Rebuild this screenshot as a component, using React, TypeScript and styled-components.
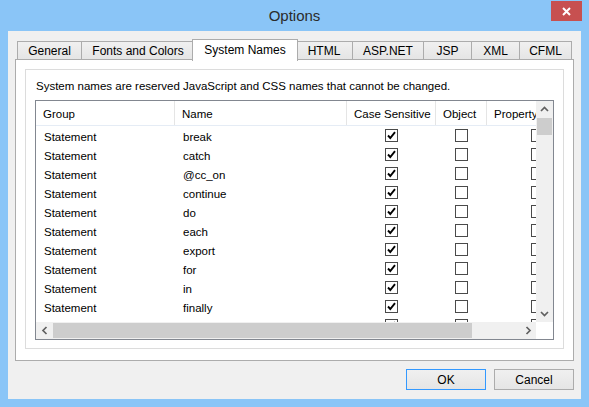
import React from "react";
import styled, { createGlobalStyle } from "styled-components";

const Global = createGlobalStyle`
  html, body { margin: 0; padding: 0; background: #8ac5f7; }
  * { box-sizing: border-box; }
  body { font-family: "Liberation Sans", Arial, sans-serif; font-size: 11.5px; color: #000; }
`;

const Window = styled.div`
  width: 589px;
  height: 407px;
  background: #8ac5f7;
  padding: 0 8px 8px 8px;
  display: flex;
  flex-direction: column;
  overflow: hidden;
`;

const TitleBar = styled.div`
  height: 31px;
  display: grid;
  grid-template-columns: 1fr auto 1fr;
  align-items: start;
`;

const Title = styled.div`
  grid-column: 2;
  font-size: 15px;
  color: #2b2b2b;
  line-height: 18px;
  margin-top: 7px;
`;

const CloseButton = styled.div`
  grid-column: 3;
  justify-self: end;
  margin-top: 1px;
  margin-right: -1px;
  width: 31px;
  height: 20px;
  background: #c75050;
  display: flex;
  align-items: center;
  justify-content: center;
`;

const Client = styled.div`
  flex: 1;
  background: #f0f0f0;
  padding: 8px 7px 8px 7px;
  display: flex;
  flex-direction: column;
`;

const TabStrip = styled.div`
  display: flex;
  align-items: flex-end;
  height: 21px;
  padding-left: 2px;
  position: relative;
  z-index: 1;
  font-size: 12px;
`;

const Tab = styled.div<{ $w: number; $active?: boolean }>`
  width: ${(p) => p.$w + (p.$active ? 4 : 0)}px;
  height: ${(p) => (p.$active ? 22 : 19)}px;
  margin-left: ${(p) => (p.$active ? -3 : -1)}px;
  margin-right: ${(p) => (p.$active ? -2 : 0)}px;
  margin-bottom: ${(p) => (p.$active ? -1 : 0)}px;
  border: 1px solid #acacac;
  border-bottom: ${(p) => (p.$active ? "none" : "1px solid #acacac")};
  background: ${(p) => (p.$active ? "#ffffff" : "linear-gradient(#f0f0f0, #e5e5e5)")};
  display: flex;
  justify-content: center;
  align-items: ${(p) => (p.$active ? "flex-start" : "center")};
  padding-top: ${(p) => (p.$active ? 3 : 1)}px;
  position: relative;
  z-index: ${(p) => (p.$active ? 2 : 0)};
  white-space: nowrap;
  &:first-child { margin-left: 0; }
`;

const Panel = styled.div`
  height: 302px;
  background: #fff;
  border: 1px solid #acacac;
  padding: 9px 9px 11px 9px;
  margin-top: -1px;
  display: flex;
  flex-direction: column;
`;

const GroupBox = styled.div`
  flex: 1;
  border: 1px solid #dcdcdc;
  padding: 0 9px 8px 9px;
  display: flex;
  flex-direction: column;
`;

const Description = styled.div`
  height: 30px;
  flex: none;
  display: flex;
  align-items: center;
  padding-left: 1px;
  padding-top: 1px;
`;

const ListFrame = styled.div`
  height: 240px;
  flex: none;
  border: 1px solid #828790;
  display: grid;
  grid-template-columns: 1fr 17px;
  grid-template-rows: 1fr 17px;
  overflow: hidden;
`;

const Viewport = styled.div`
  overflow: hidden;
`;

const COLS = "139px 172px 89px 51px 101px";

const HeaderRow = styled.div`
  display: grid;
  grid-template-columns: ${COLS};
  height: 25px;
  border-bottom: 1px solid #e5ecf5;
`;

const HeaderCell = styled.div`
  padding-left: 7px;
  padding-top: 2px;
  border-right: 1px solid #e5e5e5;
  display: flex;
  align-items: center;
  white-space: nowrap;
  overflow: hidden;
  color: #000;
`;

const Row = styled.div`
  display: grid;
  grid-template-columns: ${COLS};
  height: 19px;
`;

const Cell = styled.div<{ $center?: boolean }>`
  padding-left: ${(p) => (p.$center ? 0 : 8)}px;
  padding-top: ${(p) => (p.$center ? 0 : 2)}px;
  display: flex;
  align-items: center;
  justify-content: ${(p) => (p.$center ? "center" : "flex-start")};
  white-space: nowrap;
  overflow: hidden;
`;

const Check = styled.div`
  width: 13px;
  height: 13px;
  border: 1px solid #4a4a4a;
  background: #fff;
  display: flex;
  align-items: center;
  justify-content: center;
`;

const VScroll = styled.div`
  background: #f0f0f0;
  display: flex;
  flex-direction: column;
`;

const HScroll = styled.div`
  background: #f0f0f0;
  display: flex;
  align-items: center;
`;

const Corner = styled.div`
  background: #fff;
`;

const ArrowBtn = styled.div`
  width: 17px;
  height: 17px;
  flex: none;
  display: flex;
  align-items: center;
  justify-content: center;
`;

const VThumb = styled.div`
  height: 17px;
  margin: 0 1px;
  background: #cdcdcd;
`;

const Spacer = styled.div`
  flex: 1;
`;

const HThumb = styled.div<{ $w: number }>`
  height: 15px;
  width: ${(p) => p.$w}px;
  background: #cdcdcd;
`;

const ButtonRow = styled.div`
  display: flex;
  justify-content: flex-end;
  gap: 8px;
  margin-top: 8px;
  font-size: 12px;
`;

const Button = styled.div<{ $default?: boolean }>`
  width: 80px;
  height: 21px;
  border: 1px solid ${(p) => (p.$default ? "#3399ff" : "#acacac")};
  background: linear-gradient(#f0f0f0, #e5e5e5);
  display: flex;
  align-items: center;
  justify-content: center;
  padding-top: 1px;
`;

const Chevron = ({ dir }: { dir: "up" | "down" | "left" | "right" }) => {
  const d = {
    up: "M1 5 L4.5 1.5 L8 5",
    down: "M1 2 L4.5 5.5 L8 2",
    left: "M5.5 1 L2 4.5 L5.5 8",
    right: "M2.5 1 L6 4.5 L2.5 8",
  }[dir];
  const vertical = dir === "up" || dir === "down";
  return (
    <svg width={vertical ? 9 : 8} height={vertical ? 7 : 9} viewBox={vertical ? "0 0 9 7" : "0 0 8 9"}>
      <path d={d} fill="none" stroke="#606060" strokeWidth="1.7" />
    </svg>
  );
};

const CheckBox = ({ checked }: { checked?: boolean }) => (
  <Check>
    {checked && (
      <svg width="9" height="9" viewBox="0 0 9 9">
        <path d="M1 4.5 L3.3 7 L8 1.2" fill="none" stroke="#000" strokeWidth="1.9" />
      </svg>
    )}
  </Check>
);

const tabs: [string, number][] = [
  ["General", 65],
  ["Fonts and Colors", 114],
  ["System Names", 102],
  ["HTML", 58],
  ["ASP.NET", 72],
  ["JSP", 49],
  ["XML", 49],
  ["CFML", 53],
];

const names = ["break", "catch", "@cc_on", "continue", "do", "each", "export", "for", "in", "finally"];

export default function App() {
  return (
    <>
      <Global />
      <Window>
        <TitleBar>
          <Title>Options</Title>
          <CloseButton>
            <svg width="9" height="9" viewBox="0 0 9 9">
              <path d="M1 1 L8 8 M8 1 L1 8" stroke="#fff" strokeWidth="2" />
            </svg>
          </CloseButton>
        </TitleBar>
        <Client>
          <TabStrip>
            {tabs.map(([t, w]) => (
              <Tab key={t} $w={w} $active={t === "System Names"}>
                {t}
              </Tab>
            ))}
          </TabStrip>
          <Panel>
            <GroupBox>
              <Description>System names are reserved JavaScript and CSS names that cannot be changed.</Description>
              <ListFrame>
                <Viewport>
                  <HeaderRow>
                    <HeaderCell>Group</HeaderCell>
                    <HeaderCell>Name</HeaderCell>
                    <HeaderCell>Case Sensitive</HeaderCell>
                    <HeaderCell>Object</HeaderCell>
                    <HeaderCell>Property</HeaderCell>
                  </HeaderRow>
                  {names.map((n) => (
                    <Row key={n}>
                      <Cell>Statement</Cell>
                      <Cell>{n}</Cell>
                      <Cell $center>
                        <CheckBox checked />
                      </Cell>
                      <Cell $center>
                        <CheckBox />
                      </Cell>
                      <Cell $center>
                        <CheckBox />
                      </Cell>
                    </Row>
                  ))}
                  <Row>
                    <Cell />
                    <Cell />
                    <Cell $center>
                      <CheckBox checked />
                    </Cell>
                    <Cell $center>
                      <CheckBox />
                    </Cell>
                    <Cell $center>
                      <CheckBox />
                    </Cell>
                  </Row>
                </Viewport>
                <VScroll>
                  <ArrowBtn>
                    <Chevron dir="up" />
                  </ArrowBtn>
                  <VThumb />
                  <Spacer />
                  <ArrowBtn>
                    <Chevron dir="down" />
                  </ArrowBtn>
                </VScroll>
                <HScroll>
                  <ArrowBtn>
                    <Chevron dir="left" />
                  </ArrowBtn>
                  <HThumb $w={419} />
                  <Spacer />
                  <ArrowBtn>
                    <Chevron dir="right" />
                  </ArrowBtn>
                </HScroll>
                <Corner />
              </ListFrame>
            </GroupBox>
          </Panel>
          <ButtonRow>
            <Button $default>OK</Button>
            <Button>Cancel</Button>
          </ButtonRow>
        </Client>
      </Window>
    </>
  );
}
